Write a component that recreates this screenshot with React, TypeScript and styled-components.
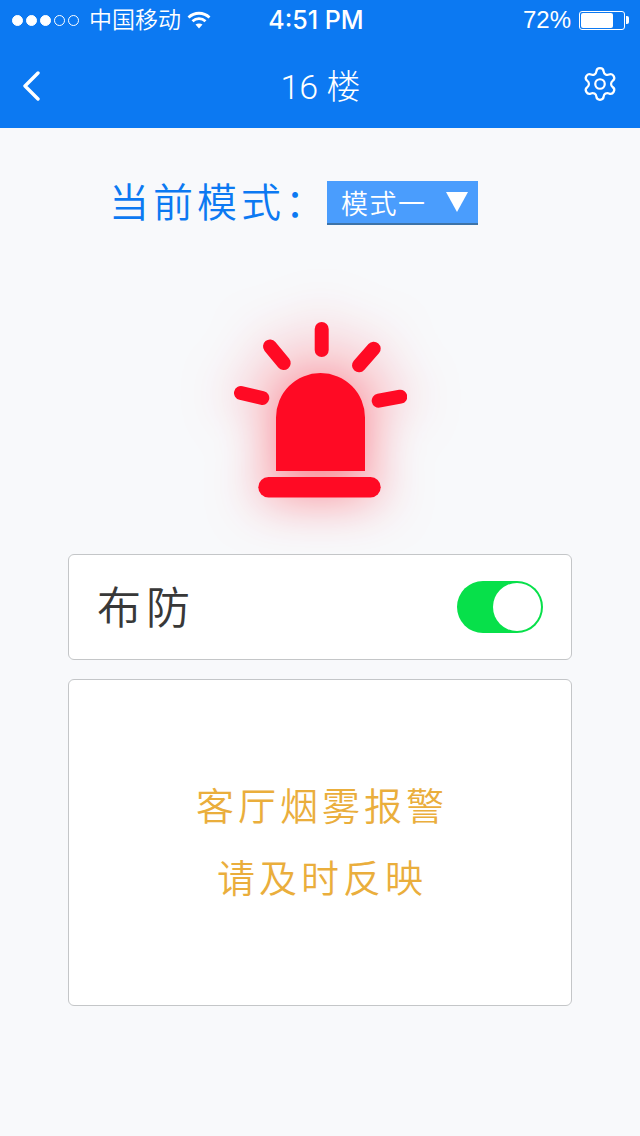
import React from "react";
import styled, { createGlobalStyle } from "styled-components";
import { Settings } from "lucide-react";

const Global = createGlobalStyle`
  html, body { margin: 0; padding: 0; background: #f8f9fb; }
  body { font-family: "Liberation Sans", "Noto Sans CJK SC", sans-serif; }
`;
const Page = styled.div`
  width: 640px;
  height: 1136px;
  display: flex;
  flex-direction: column;
  overflow: hidden;
  background: #f8f9fb;
`;
const Header = styled.header`
  height: 128px;
  background: #0c79f2;
  color: #fff;
  flex: none;
`;
const StatusBar = styled.div`
  height: 40px;
  padding: 0 15px 0 12px;
  display: grid;
  grid-template-columns: 1fr auto 1fr;
  align-items: center;
`;
const Carrier = styled.div`
  display: flex;
  align-items: center;
  font-size: 23px;
  font-weight: 350;
`;
const Dot = styled.span<{ $on: boolean }>`
  width: 11px;
  height: 11px;
  box-sizing: border-box;
  border-radius: 50%;
  margin-right: 3px;
  border: 1px solid #fff;
  background: ${(p) => (p.$on ? "#fff" : "transparent")};
`;
const CarrierName = styled.span`
  margin-left: 7px;
  margin-right: 6px;
  line-height: 40px;
`;
const Time = styled.div`
  font-family: Inter, "Liberation Sans", sans-serif;
  font-size: 25px;
  font-weight: 500;
  margin-right: 4px;
  margin-left: -1px;
`;
const Battery = styled.div`
  display: flex;
  align-items: center;
  justify-content: flex-end;
  font-size: 24px;
  gap: 8px;
`;
const BatteryShell = styled.div`
  width: 46px;
  height: 19px;
  box-sizing: border-box;
  border: 1px solid #fff;
  border-radius: 3px;
  padding: 1px;
  position: relative;
  &::after {
    content: "";
    position: absolute;
    right: -5px;
    top: 4px;
    width: 3px;
    height: 8px;
    background: #fff;
    border-radius: 0 2px 2px 0;
  }
`;
const BatteryFill = styled.div`
  width: 75%;
  height: 100%;
  background: #fff;
  border-radius: 2px;
`;
const NavBar = styled.div`
  height: 88px;
  padding: 0 21px 0 22px;
  display: grid;
  grid-template-columns: 1fr auto 1fr;
  align-items: center;
`;
const BackIcon = styled.svg`
  display: block;
  margin-top: 4px;
`;
const Title = styled.h1`
  margin: 0;
  font-size: 34px;
  font-weight: 300;
  font-family: Roboto, "Noto Sans CJK SC", sans-serif;
`;
const NavRight = styled.div`
  display: flex;
  justify-content: flex-end;
`;
const Main = styled.main`
  flex: 1;
  display: flex;
  flex-direction: column;
  align-items: center;
  padding-top: 53px;
`;
const ModeRow = styled.div`
  display: flex;
  align-items: center;
  align-self: flex-start;
  margin-left: 109px;
  height: 44px;
`;
const ModeLabel = styled.span`
  color: #0c79f2;
  font-size: 40px;
  font-weight: 350;
  letter-spacing: 4px;
  line-height: 44px;
  width: 218px;
  flex: none;
  white-space: nowrap;
`;
const ModeSelect = styled.div`
  width: 151px;
  height: 44px;
  box-sizing: border-box;
  background: #4a9dfd;
  border-bottom: 2px solid #3d73a8;
  color: #fff;
  font-size: 27px;
  font-weight: 350;
  letter-spacing: 1.5px;
  display: flex;
  align-items: center;
  justify-content: space-between;
  padding: 0 10px 0 14px;
`;
const Siren = styled.svg`
  display: block;
  margin-top: 97px;
  filter: drop-shadow(0 0 26px rgba(255, 20, 40, 0.56));
`;
const Card = styled.section`
  width: 504px;
  box-sizing: border-box;
  background: #fff;
  border: 1px solid #c4c6c8;
  border-radius: 6px;
`;
const ToggleCard = styled(Card)`
  height: 106px;
  margin-top: 56px;
  display: flex;
  align-items: center;
  justify-content: space-between;
  padding: 0 28px;
`;
const ToggleLabel = styled.span`
  font-size: 44px;
  font-weight: 350;
  color: #383838;
  letter-spacing: 5px;
  padding-bottom: 4px;
`;
const Toggle = styled.div`
  width: 86px;
  height: 52px;
  box-sizing: border-box;
  border-radius: 26px;
  background: #07e04a;
  padding: 2px;
  display: flex;
  justify-content: flex-end;
`;
const Knob = styled.div`
  width: 48px;
  height: 48px;
  border-radius: 50%;
  background: #fff;
`;
const MessageCard = styled(Card)`
  height: 327px;
  margin-top: 19px;
  display: flex;
  flex-direction: column;
  align-items: center;
  justify-content: center;
  gap: 24px;
  color: #eaae3c;
  font-size: 38px;
  font-weight: 350;
  letter-spacing: 4px;
  padding-left: 4px;
`;
const MessageLine = styled.div`
  line-height: 48px;
`;

export default function App() {
  return (
    <Page>
      <Global />
      <Header>
        <StatusBar>
          <Carrier>
            {[1, 1, 1, 0, 0].map((on, i) => (
              <Dot key={i} $on={!!on} />
            ))}
            <CarrierName>中国移动</CarrierName>
            <svg width="24" height="18" viewBox="0 0 24 18" fill="none" stroke="#fff" strokeWidth="2.8">
              <path d="M1.5 6.5C7.5 .8 16.5 .8 22.5 6.5" />
              <path d="M5.5 10.2C9.2 6.8 14.8 6.8 18.5 10.2" />
              <path d="M12 17.5 8.5 13.6C10.5 12 13.5 12 15.5 13.6Z" fill="#fff" stroke="none" />
            </svg>
          </Carrier>
          <Time>4:51 PM</Time>
          <Battery>
            <span>72%</span>
            <BatteryShell>
              <BatteryFill />
            </BatteryShell>
          </Battery>
        </StatusBar>
        <NavBar>
          <BackIcon width="20" height="30" viewBox="0 0 20 30" fill="none" stroke="#fff" strokeWidth="3.4" strokeLinecap="round" strokeLinejoin="round">
            <path d="M16 2 3 15l13 13" />
          </BackIcon>
          <Title>16 楼</Title>
          <NavRight>
            <Settings size={38} strokeWidth={1.4} color="#fff" />
          </NavRight>
        </NavBar>
      </Header>
      <Main>
        <ModeRow>
          <ModeLabel>当前模式：</ModeLabel>
          <ModeSelect>
            <span>模式一</span>
            <svg width="22" height="20" viewBox="0 0 22 20">
              <path d="M0 0h22L11 20z" fill="#fff" />
            </svg>
          </ModeSelect>
        </ModeRow>
        <Siren width="173" height="176" viewBox="234 322 173 176">
          <g stroke="#ff0a24" strokeWidth="14" strokeLinecap="round">
            <path d="M321.7 329V350" />
            <path d="M270 346.5 283.7 363" />
            <path d="M373.7 348.7 359 365.3" />
            <path d="M241 393 262.3 398" />
            <path d="M400.3 396.7 378.7 400.7" />
          </g>
          <path d="M276 471V417.5a44.5 44.5 0 0 1 89 0V471Z" fill="#ff0a24" />
          <rect x="258.3" y="477" width="122.4" height="20.4" rx="10.2" fill="#ff0a24" />
        </Siren>
        <ToggleCard>
          <ToggleLabel>布防</ToggleLabel>
          <Toggle>
            <Knob />
          </Toggle>
        </ToggleCard>
        <MessageCard>
          <MessageLine>客厅烟雾报警</MessageLine>
          <MessageLine>请及时反映</MessageLine>
        </MessageCard>
      </Main>
    </Page>
  );
}
